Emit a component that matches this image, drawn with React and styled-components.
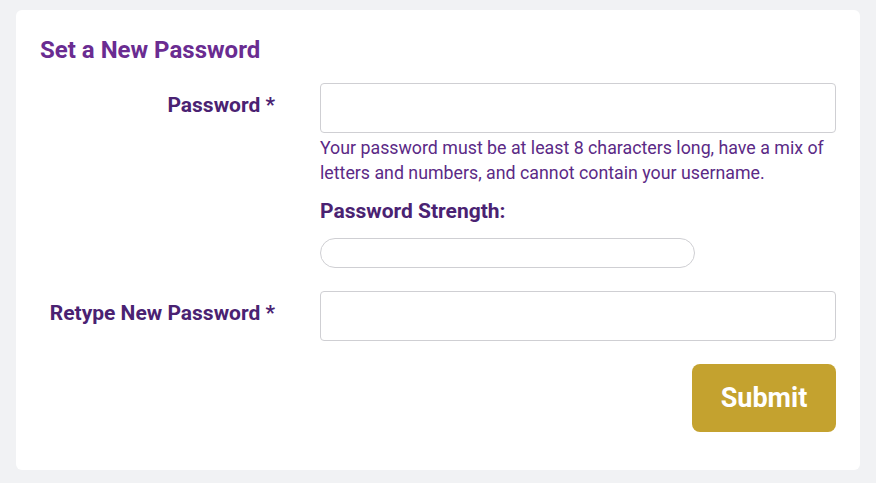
import React, { useState } from 'react';
import styled, { createGlobalStyle } from 'styled-components';

const GlobalStyle = createGlobalStyle`
  html, body {
    margin: 0;
    padding: 0;
    background: #f1f2f4;
    font-family: Roboto, "Liberation Sans", sans-serif;
  }
`;

const Page = styled.div`
  padding: 10px 16px 13px 16px;
`;

const Card = styled.form`
  background: #ffffff;
  border-radius: 6px;
  padding: 25px 24px 38px 24px;
`;

const Title = styled.h2`
  margin: 0 0 18px 0;
  font-size: 24px;
  line-height: 30px;
  font-weight: 700;
  color: #6a2c91;
`;

const Row = styled.div`
  display: grid;
  grid-template-columns: 235px 1fr;
  column-gap: 45px;
  margin-bottom: ${(p) => p.gap || 0}px;
`;

const Label = styled.label`
  text-align: right;
  padding-top: ${(p) => p.top || 9}px;
  font-size: 21px;
  line-height: 26px;
  font-weight: 700;
  color: #4a2272;
`;

const Field = styled.div`
  display: flex;
  flex-direction: column;
`;

const Input = styled.input`
  box-sizing: border-box;
  height: 50px;
  width: 100%;
  border: 1px solid #cfcfd3;
  border-radius: 4px;
  padding: 0 12px;
  font-size: 16px;
  font-family: inherit;
  outline: none;
`;

const Help = styled.p`
  margin: 2px 0 0 0;
  font-size: 17.8px;
  line-height: 25px;
  color: #5b2a86;
`;

const StrengthTitle = styled.div`
  margin-top: 13px;
  font-size: 21px;
  line-height: 26px;
  font-weight: 700;
  color: #4a2272;
`;

const StrengthBar = styled.div`
  box-sizing: border-box;
  margin-top: 14px;
  width: 375px;
  height: 30px;
  border: 1px solid #cfcfd3;
  border-radius: 15px;
  overflow: hidden;
`;

const Actions = styled.div`
  display: flex;
  justify-content: flex-end;
`;

const SubmitButton = styled.button`
  width: 144px;
  height: 68px;
  border: none;
  border-radius: 8px;
  background: #c4a22f;
  color: #ffffff;
  font-family: inherit;
  font-size: 27px;
  font-weight: 700;
  cursor: pointer;
`;

export default function App() {
  const [password, setPassword] = useState('');
  const [confirm, setConfirm] = useState('');

  return (
    <Page>
      <GlobalStyle />
      <Card onSubmit={(e) => e.preventDefault()}>
        <Title>Set a New Password</Title>
        <Row gap={23}>
          <Label>Password *</Label>
          <Field>
            <Input type="password" value={password} onChange={(e) => setPassword(e.target.value)} />
            <Help>
              Your password must be at least 8 characters long, have a mix of letters and numbers, and cannot
              contain your username.
            </Help>
            <StrengthTitle>Password Strength:</StrengthTitle>
            <StrengthBar />
          </Field>
        </Row>
        <Row gap={23}>
          <Label>Retype New Password *</Label>
          <Field>
            <Input type="password" value={confirm} onChange={(e) => setConfirm(e.target.value)} />
          </Field>
        </Row>
        <Actions>
          <SubmitButton type="submit">Submit</SubmitButton>
        </Actions>
      </Card>
    </Page>
  );
}
